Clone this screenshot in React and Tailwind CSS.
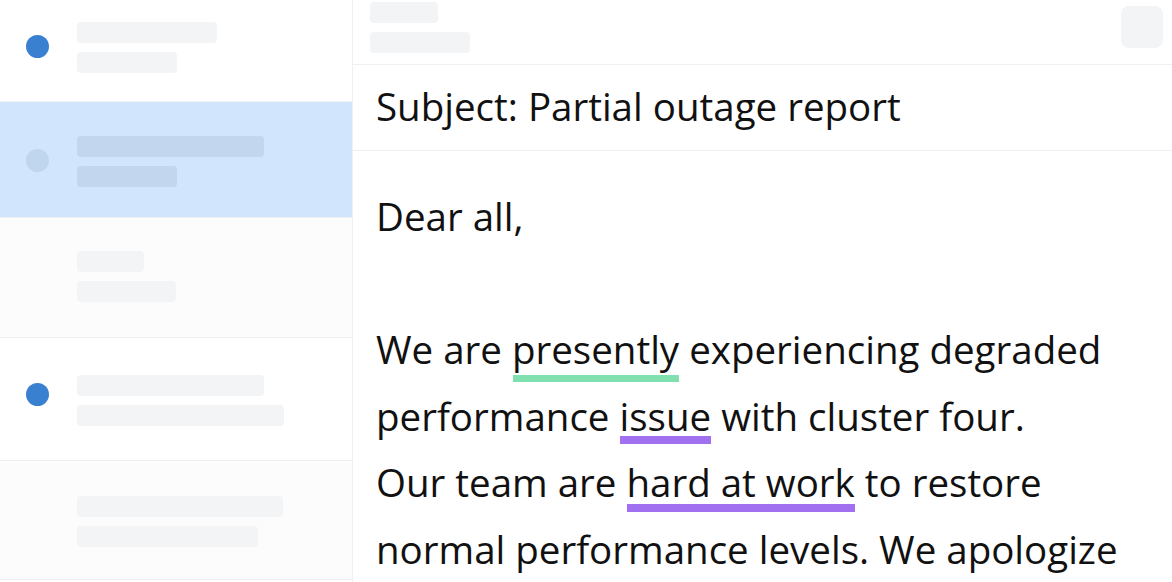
import React from 'react';

const rows = [
    { h: 102, pt: 22, bars: [140, 100], dot: 'unread', dotTop: 13, bg: 'bg-white' },
    { h: 116, pt: 34, bars: [187, 100], dot: 'read', dotTop: 13, bg: 'bg-[#d1e6fc]' },
    { h: 120, pt: 33, bars: [67, 99], dot: null, bg: 'bg-[#fcfcfd]' },
    { h: 123, pt: 37, bars: [187, 207], dot: 'unread', dotTop: 8, bg: 'bg-white' },
    { h: 119, pt: 35, bars: [206, 181], dot: null, bg: 'bg-[#fcfcfd]' },
];

// подчёркивание под словом
function Mark({ bar, children }) {
    return (
        <span className="relative">
            {children}
            <span className={`absolute left-[1px] right-0 ${bar}`} />
        </span>
    );
}

export default function App() {
    return (
        <div className="flex w-[1172px] h-[582px] bg-white overflow-hidden" style={{ fontFamily: '"Open Sans", sans-serif' }}>
            {/* список писем */}
            <div className="w-[353px] shrink-0 border-r border-[#eef0f2] flex flex-col">
                {rows.map((row, i) => (
                    <div
                        key={i}
                        className={`flex items-start border-b border-[#eff0f2] ${row.bg}`}
                        style={{ height: row.h, paddingTop: row.pt }}
                    >
                        <div className="w-[77px] shrink-0 pl-[26px]">
                            {row.dot && (
                                <div
                                    className={`w-[23px] h-[23px] rounded-full ${row.dot === 'unread' ? 'bg-[#3a80d0]' : 'bg-[#c0d6ee]'}`}
                                    style={{ marginTop: row.dotTop }}
                                />
                            )}
                        </div>
                        <div className="flex flex-col gap-[9px]">
                            <div className={`h-[21px] rounded ${row.dot === 'read' ? 'bg-[#c2d7ee]' : 'bg-[#f3f4f6]'}`} style={{ width: row.bars[0] }} />
                            <div className={`h-[21px] rounded ${row.dot === 'read' ? 'bg-[#c2d7ee]' : 'bg-[#f3f4f6]'}`} style={{ width: row.bars[1] }} />
                        </div>
                    </div>
                ))}
            </div>

            {/* письмо */}
            <div className="flex-1 flex flex-col min-w-0">
                <div className="h-[65px] shrink-0 border-b border-[#eef0f2] flex justify-between pl-[17px] pr-[9px]">
                    <div className="flex flex-col gap-[9px] pt-[2px]">
                        <div className="w-[68px] h-[21px] rounded bg-[#f3f4f6]" />
                        <div className="w-[100px] h-[21px] rounded bg-[#f3f4f6]" />
                    </div>
                    <div className="w-[42px] h-[42px] mt-[6px] rounded-lg bg-[#f3f4f6]" />
                </div>
                <div className="h-[86px] shrink-0 border-b border-[#eef0f2] pl-[23px] pt-[22px]">
                    <div className="text-[38.5px] text-[#111] leading-[38.5px] whitespace-nowrap">Subject: Partial outage report</div>
                </div>
                <div className="pl-[23px] pt-[32px] text-[38.5px] leading-[66.5px] text-[#111] whitespace-nowrap">
                    <div>Dear all,</div>
                    <div>&nbsp;</div>
                    <div>We are <Mark bar="top-full h-[7px] bg-[#80e0b0]">presently</Mark> experiencing degraded</div>
                    <div>performance <Mark bar="top-[calc(100%-6px)] h-[8px] bg-[#a070f0]">issue</Mark> with cluster four.</div>
                    <div>Our team are <Mark bar="top-[calc(100%-4px)] h-[8px] bg-[#a070f0]">hard at work</Mark> to restore</div>
                    <div>normal performance levels. We apologize</div>
                </div>
            </div>
        </div>
    );
}
